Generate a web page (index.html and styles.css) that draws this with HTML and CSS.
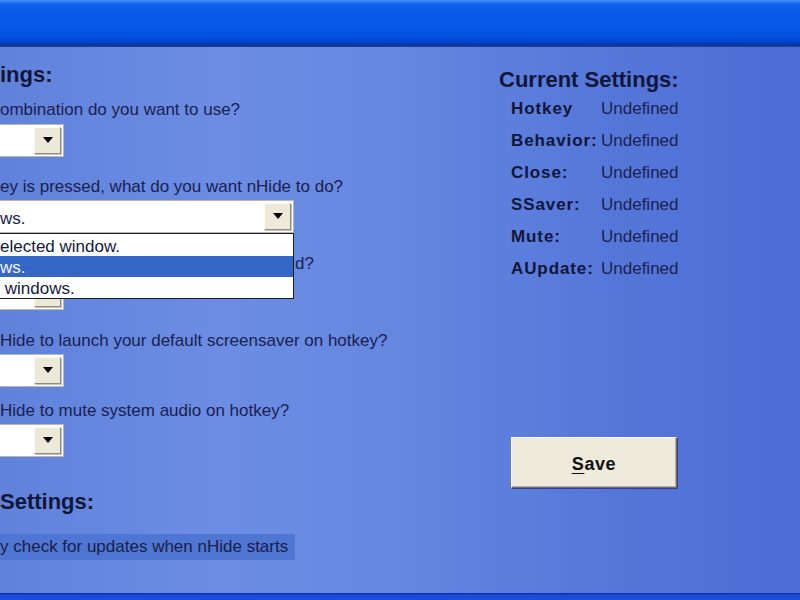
FILE: index.html
```html
<!DOCTYPE html>
<html lang="en">
<head>
<meta charset="utf-8">
<title>nHide Settings</title>
<link rel="stylesheet" href="styles.css">
</head>
<body>
<div class="window">
  <div class="titlebar"></div>
  <div class="client">
    <section class="left">
      <h2 class="heading">ings:</h2>

      <p class="label first">ombination do you want to use?</p>
      <div class="combo short first-combo">
        <span class="combo-text"></span>
        <span class="combo-btn"><svg width="10" height="6" viewBox="0 0 10 6"><path d="M0 0H10L5 6Z" fill="#000"/></svg></span>
      </div>

      <p class="label">ey is pressed, what do you want nHide to do?</p>
      <div class="combo-wrap">
        <div class="combo long">
          <span class="combo-text">ws.</span>
          <span class="combo-btn"><svg width="10" height="6" viewBox="0 0 10 6"><path d="M0 0H10L5 6Z" fill="#000"/></svg></span>
        </div>
        <ul class="droplist">
          <li>elected window.</li>
          <li class="selected">ws.</li>
          <li>&nbsp;windows.</li>
        </ul>
      </div>

      <p class="label behind">d?</p>
      <div class="combo short">
        <span class="combo-text"></span>
        <span class="combo-btn"><svg width="10" height="6" viewBox="0 0 10 6"><path d="M0 0H10L5 6Z" fill="#000"/></svg></span>
      </div>

      <p class="label spaced">Hide to launch your default screensaver on hotkey?</p>
      <div class="combo short">
        <span class="combo-text"></span>
        <span class="combo-btn"><svg width="10" height="6" viewBox="0 0 10 6"><path d="M0 0H10L5 6Z" fill="#000"/></svg></span>
      </div>

      <p class="label tight">Hide to mute system audio on hotkey?</p>
      <div class="combo short">
        <span class="combo-text"></span>
        <span class="combo-btn"><svg width="10" height="6" viewBox="0 0 10 6"><path d="M0 0H10L5 6Z" fill="#000"/></svg></span>
      </div>

      <h2 class="heading second">Settings:</h2>
      <p class="check-label">y check for updates when nHide starts</p>
    </section>

    <section class="right">
      <h2 class="heading">Current Settings:</h2>
      <dl class="settings">
        <dt>Hotkey</dt><dd>Undefined</dd>
        <dt>Behavior:</dt><dd>Undefined</dd>
        <dt>Close:</dt><dd>Undefined</dd>
        <dt>SSaver:</dt><dd>Undefined</dd>
        <dt>Mute:</dt><dd>Undefined</dd>
        <dt>AUpdate:</dt><dd>Undefined</dd>
      </dl>
      <button class="save"><span class="accel">S</span>ave</button>
    </section>
  </div>
  <div class="frame-bottom"></div>
</div>
</body>
</html>
```

FILE: styles.css
```css
* { box-sizing: border-box; }

html, body {
  margin: 0;
  padding: 0;
  width: 800px;
  height: 600px;
  overflow: hidden;
}

body {
  font-family: "Liberation Sans", Arial, sans-serif;
  color: #1a2150;
}

.window {
  display: flex;
  flex-direction: column;
  width: 800px;
  height: 600px;
}

.titlebar {
  height: 47px;
  flex: none;
  background: linear-gradient(180deg,
    #4a93f8 0px, #2a78f2 2px, #1466ee 4px, #0a5de9 9px,
    #0558e6 28px, #034fdc 37px, #0044cf 42px, #003ab8 44px,
    #17308a 45px, #26409a 47px);
}

.client {
  flex: 1;
  display: grid;
  grid-template-columns: 499px 1fr;
  background:
    linear-gradient(90deg, #6182db 0%, #6c8de3 28%, #6587e0 50%, #5779da 72%, #4d6cd5 100%);
}

.frame-bottom {
  height: 7px;
  flex: none;
  background: linear-gradient(180deg, #0b2a9c 0px, #1a49d6 2px, #1c4fdd 7px);
}

.heading {
  margin: 0;
  font-size: 22px;
  line-height: 26px;
  font-weight: bold;
  color: #0f1638;
}

.left {
  padding-top: 15px;
  position: relative;
}

.label {
  margin: 20px 0 0;
  font-size: 17px;
  line-height: 20px;
  white-space: nowrap;
}
.label.first { margin-top: 12px; }
.label.behind { margin-top: 21px; padding-left: 295px; }
.label.spaced { margin-top: 21px; }
.label.tight { margin-top: 14px; }

.combo-wrap {
  position: relative;
  margin-top: 3px;
  width: 294px;
}

.combo {
  display: flex;
  align-items: center;
  justify-content: space-between;
  height: 33px;
  margin-top: 3px;
  background: #fff;
  border: 1px solid #b9b7ae;
  border-left: none;
  padding: 2px 2px 3px 0;
}
.combo.first-combo { margin-top: 4px; }
.combo-wrap .combo { margin-top: 0; }
.combo.short { width: 64px; }
.combo.long { width: 294px; }

.combo-text {
  font-size: 17px;
  line-height: 20px;
  padding-top: 6px;
}

.combo-btn {
  width: 27px;
  height: 27px;
  flex: none;
  display: flex;
  align-items: center;
  justify-content: center;
  background: #ece9d8;
  border: 1px solid;
  border-color: #fbfaf4 #8f8c80 #8f8c80 #fbfaf4;
  box-shadow: 1px 1px 0 #c8c5b8;
}

.droplist {
  position: absolute;
  left: 0;
  top: 100%;
  width: 294px;
  margin: 0;
  padding: 1px 0 0;
  list-style: none;
  background: #fff;
  border: 1px solid #1b1b22;
  border-left: none;
  z-index: 2;
}
.droplist li {
  height: 21px;
  font-size: 17px;
  line-height: 19px;
  padding-top: 2px;
  color: #141a40;
  white-space: nowrap;
}
.droplist li.selected {
  background: #3568c6;
  color: #f2f5ff;
}

.heading.second { margin-top: 32px; }

.check-label {
  margin: 19px 0 0;
  width: 295px;
  height: 26px;
  font-size: 17px;
  line-height: 26px;
  background: #4f76d2;
  white-space: nowrap;
  color: #18204c;
}

.right {
  padding-top: 20px;
  display: flex;
  flex-direction: column;
  align-items: flex-start;
}

.settings {
  margin: 0 0 0 12px;
  display: grid;
  grid-template-columns: 90px auto;
  grid-auto-rows: 32px;
  align-items: center;
}
.settings dt {
  font-weight: bold;
  font-size: 17px;
  letter-spacing: 0.9px;
  color: #10163a;
}
.settings dd {
  margin: 0;
  font-size: 17px;
  color: #1a2150;
}

.save {
  margin: 152px 0 0 12px;
  width: 166px;
  height: 51px;
  background: #eeebdc;
  border: 1px solid;
  border-color: #ffffff #6f6d66 #6f6d66 #ffffff;
  box-shadow: inset -1px -1px 0 #b4b1a4, 1px 1px 0 #39407a;
  font-family: "Liberation Sans", Arial, sans-serif;
  font-weight: bold;
  font-size: 18px;
  letter-spacing: 0.6px;
  color: #111111;
  padding: 3px 0 0;
}
.accel { text-decoration: underline; text-underline-offset: 3px; }
```
